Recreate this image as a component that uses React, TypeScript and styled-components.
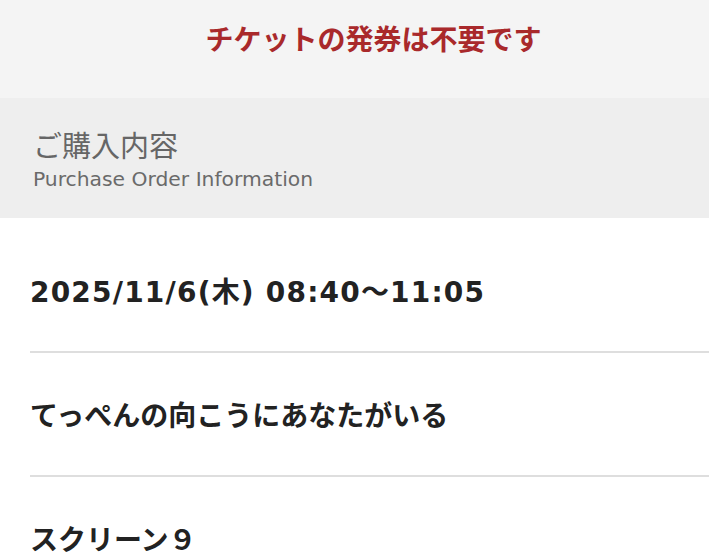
import styled, { createGlobalStyle } from "styled-components";

const GlobalStyle = createGlobalStyle`
  html, body {
    margin: 0;
    padding: 0;
    background: #ffffff;
  }
  body {
    font-family: "DejaVu Sans", "Noto Sans CJK JP", sans-serif;
  }
`;

const Page = styled.div`
  width: 709px;
  height: 559px;
  overflow: hidden;
`;

const Notice = styled.div`
  height: 98px;
  background-color: #f4f4f4;
  display: flex;
  justify-content: center;
  padding: 18px 0 0 38px;
  box-sizing: border-box;
`;

const NoticeText = styled.p`
  margin: 0;
  font-family: "Noto Sans CJK JP", sans-serif;
  font-size: 28px;
  line-height: 40px;
  font-weight: 700;
  color: #a9292b;
`;

const SectionHead = styled.div`
  height: 120px;
  background-color: #eeeeee;
  padding: 26px 33px 0;
  box-sizing: border-box;
`;

const HeadTitle = styled.h2`
  margin: 0;
  font-family: "Noto Sans CJK JP", sans-serif;
  font-size: 29px;
  line-height: 40px;
  font-weight: 400;
  color: #666666;
`;

const HeadSub = styled.p`
  margin: 2px 0 0;
  font-family: "DejaVu Sans", sans-serif;
  font-size: 20.3px;
  line-height: 26px;
  color: #6a6a6a;
`;

const List = styled.div`
  padding: 11px 0 0 30px;
`;

const Row = styled.div`
  height: 124px;
  display: flex;
  align-items: center;
  border-bottom: 2px solid #dedede;
  box-sizing: border-box;
`;

const RowText = styled.span<{ $spacing?: number }>`
  font-family: "DejaVu Sans", "Noto Sans CJK JP", sans-serif;
  font-size: 28px;
  font-weight: 700;
  letter-spacing: ${(p) => p.$spacing ?? 0}px;
  color: #222222;
`;

const items = [
  { text: "2025/11/6(木) 08:40～11:05", spacing: 1.2 },
  { text: "てっぺんの向こうにあなたがいる", spacing: 0 },
  { text: "スクリーン９", spacing: 0 },
];

export default function App() {
  return (
    <Page>
      <GlobalStyle />
      <Notice>
        <NoticeText>チケットの発券は不要です</NoticeText>
      </Notice>
      <SectionHead>
        <HeadTitle>ご購入内容</HeadTitle>
        <HeadSub>Purchase Order Information</HeadSub>
      </SectionHead>
      <List>
        {items.map((item) => (
          <Row key={item.text}>
            <RowText $spacing={item.spacing}>{item.text}</RowText>
          </Row>
        ))}
      </List>
    </Page>
  );
}
